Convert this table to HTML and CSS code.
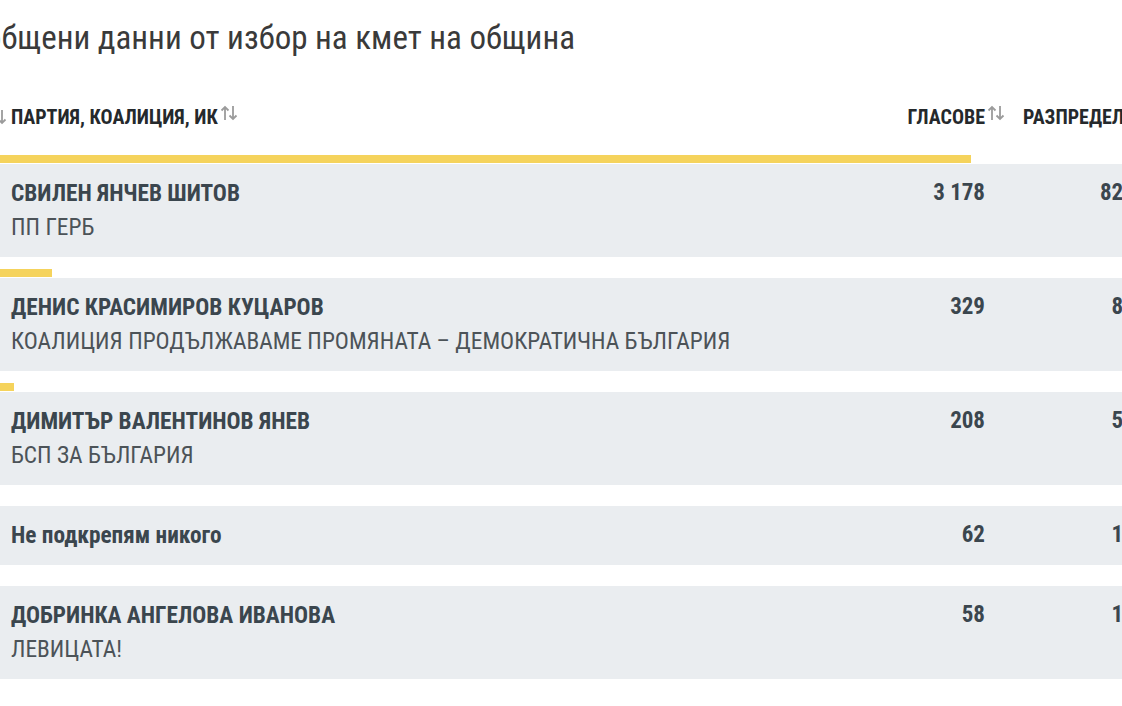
FILE: index.html
```html
<!DOCTYPE html>
<html lang="bg">
<head>
<meta charset="utf-8">
<title>Обобщени данни от избор на кмет на община</title>
<link rel="stylesheet" href="styles.css">
</head>
<body>
<div class="page">
  <h1 class="title">Обобщени данни от избор на кмет на община</h1>

  <div class="thead">
    <div class="th-lead"><svg class="sort" viewBox="0 0 18 16"><path d="M5 15V2M1.5 5.5L5 2l3.5 3.5M13 1v13M9.5 10.5L13 14l3.5-3.5"/></svg></div>
    <div class="th-name">ПАРТИЯ, КОАЛИЦИЯ, ИК<svg class="sort" viewBox="0 0 18 16"><path d="M5 15V2M1.5 5.5L5 2l3.5 3.5M13 1v13M9.5 10.5L13 14l3.5-3.5"/></svg></div>
    <div class="th-votes">ГЛАСОВЕ<svg class="sort" viewBox="0 0 18 16"><path d="M5 15V2M1.5 5.5L5 2l3.5 3.5M13 1v13M9.5 10.5L13 14l3.5-3.5"/></svg></div>
    <div class="th-pct">РАЗПРЕДЕЛЕНИЕ<svg class="sort" viewBox="0 0 18 16"><path d="M5 15V2M1.5 5.5L5 2l3.5 3.5M13 1v13M9.5 10.5L13 14l3.5-3.5"/></svg></div>
  </div>

  <div class="list">
    <div class="item">
      <div class="bar" style="width: 991px"></div>
      <div class="row">
        <div class="name-cell">
          <div class="name">СВИЛЕН ЯНЧЕВ ШИТОВ</div>
          <div class="party">ПП ГЕРБ</div>
        </div>
        <div class="votes">3 178</div>
        <div class="pct">82,87 %</div>
      </div>
    </div>

    <div class="item">
      <div class="bar" style="width: 72px"></div>
      <div class="row">
        <div class="name-cell">
          <div class="name">ДЕНИС КРАСИМИРОВ КУЦАРОВ</div>
          <div class="party">КОАЛИЦИЯ ПРОДЪЛЖАВАМЕ ПРОМЯНАТА – ДЕМОКРАТИЧНА БЪЛГАРИЯ</div>
        </div>
        <div class="votes">329</div>
        <div class="pct">8,58 %</div>
      </div>
    </div>

    <div class="item">
      <div class="bar" style="width: 34px"></div>
      <div class="row">
        <div class="name-cell">
          <div class="name">ДИМИТЪР ВАЛЕНТИНОВ ЯНЕВ</div>
          <div class="party">БСП ЗА БЪЛГАРИЯ</div>
        </div>
        <div class="votes">208</div>
        <div class="pct">5,42 %</div>
      </div>
    </div>

    <div class="item">
      <div class="bar" style="width: 0px"></div>
      <div class="row">
        <div class="name-cell">
          <div class="name">Не подкрепям никого</div>
        </div>
        <div class="votes">62</div>
        <div class="pct">1,62 %</div>
      </div>
    </div>

    <div class="item">
      <div class="bar" style="width: 0px"></div>
      <div class="row">
        <div class="name-cell">
          <div class="name">ДОБРИНКА АНГЕЛОВА ИВАНОВА</div>
          <div class="party">ЛЕВИЦАТА!</div>
        </div>
        <div class="votes">58</div>
        <div class="pct">1,51 %</div>
      </div>
    </div>
  </div>
</div>
</body>
</html>
```

FILE: styles.css
```css
html, body {
  margin: 0;
  padding: 0;
  background: #ffffff;
  overflow: hidden;
}

body {
  font-family: "Roboto", "Liberation Sans Narrow", "DejaVu Sans Condensed", sans-serif;
  font-stretch: 75%;
  color: #333333;
}

.page {
  width: 1200px;
  margin-left: -20px;
}

.title {
  margin: 17px 0 0 -31px;
  font-size: 33px;
  line-height: 42px;
  font-weight: 400;
  color: #3a3a3a;
  white-space: nowrap;
}

.thead {
  display: flex;
  align-items: center;
  margin-top: 46px;
  height: 24px;
  font-size: 20px;
  font-weight: 700;
  color: #25292c;
  white-space: nowrap;
}

.sort {
  width: 18px;
  height: 16px;
  fill: none;
  stroke: #9b9b9b;
  stroke-width: 1.8;
  margin-left: 2px;
  align-self: flex-start;
  margin-top: 0;
  flex: none;
}

.th-lead {
  width: 25px;
  display: flex;
  justify-content: flex-end;
  margin-right: 6px;
}

.th-lead .sort {
  margin-left: 0;
  margin-right: -2px;
}

.th-name {
  flex: 1;
  display: flex;
  align-items: center;
}

.th-votes {
  width: 160px;
  display: flex;
  justify-content: flex-end;
  align-items: center;
}

.th-pct {
  width: 175px;
  padding-left: 18px;
  box-sizing: border-box;
  display: flex;
  align-items: center;
  overflow: hidden;
}

.list {
  margin-top: 26px;
  display: flex;
  flex-direction: column;
  gap: 12px;
}

.item {
  display: flex;
  flex-direction: column;
  gap: 1px;
}

.bar {
  height: 8px;
  background: #f5d35c;
}

.row {
  display: flex;
  align-items: flex-start;
  background: #eaedf0;
  padding: 15px 0 16px;
}

.name-cell {
  flex: 1;
  padding-left: 31px;
  display: flex;
  flex-direction: column;
  gap: 6px;
}

.name {
  font-size: 23.3px;
  line-height: 28px;
  font-weight: 700;
  color: #3b464e;
}

.party {
  font-size: 23.4px;
  line-height: 28px;
  font-weight: 400;
  color: #4c5358;
  white-space: nowrap;
}

.votes {
  width: 160px;
  padding-right: 20px;
  box-sizing: border-box;
  text-align: right;
  font-size: 23px;
  line-height: 28px;
  font-weight: 700;
  color: #3b464e;
}

.pct {
  width: 175px;
  padding-right: 8px;
  box-sizing: border-box;
  text-align: right;
  font-size: 23px;
  line-height: 28px;
  font-weight: 700;
  color: #3b464e;
  white-space: nowrap;
}
```
